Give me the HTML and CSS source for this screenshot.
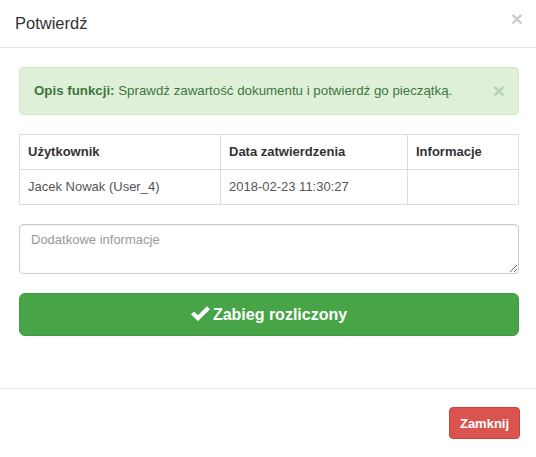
FILE: index.html
```html
<!DOCTYPE html>
<html lang="pl">
<head>
    <meta charset="UTF-8">
    <meta name="viewport" content="width=device-width, initial-scale=1.0">
    <title>Potwierdź</title>
    <link rel="stylesheet" href="styles.css">
</head>
<body>
    <div class="modal">
        <div class="modal-header">
            <h4 class="modal-title">Potwierdź</h4>
            <button type="button" class="close">&times;</button>
        </div>
        <div class="modal-body">
            <div class="alert">
                <span><b>Opis funkcji:</b> Sprawdź zawartość dokumentu i potwierdź go pieczątką.</span>
                <button type="button" class="close alert-close">&times;</button>
            </div>
            <table class="info-table">
                <colgroup>
                    <col class="col-user">
                    <col class="col-date">
                    <col>
                </colgroup>
                <thead>
                    <tr>
                        <th>Użytkownik</th>
                        <th>Data zatwierdzenia</th>
                        <th>Informacje</th>
                    </tr>
                </thead>
                <tbody>
                    <tr>
                        <td>Jacek Nowak (User_4)</td>
                        <td>2018-02-23 11:30:27</td>
                        <td></td>
                    </tr>
                </tbody>
            </table>
            <textarea class="notes" placeholder="Dodatkowe informacje"></textarea>
            <button type="button" class="btn-confirm">
                <svg class="check" width="19" height="15" viewBox="0 0 19 15">
                    <polygon points="0,8.5 3,5.5 7,9.3 16,0.3 19,3.3 7,15" fill="#fff"/>
                </svg>
                Zabieg rozliczony
            </button>
        </div>
        <div class="modal-footer">
            <button type="button" class="btn-close">Zamknij</button>
        </div>
    </div>
</body>
</html>
```

FILE: styles.css
```css
* {
    margin: 0;
    padding: 0;
    box-sizing: border-box;
}

body {
    font-family: "Liberation Sans", Arial, sans-serif;
    font-size: 13px;
    line-height: 18px;
    color: #333;
    background: #fff;
}

.modal {
    width: 536px;
    background: #fff;
}

.modal-header {
    display: flex;
    justify-content: space-between;
    align-items: flex-start;
    padding: 12px 13px 12px 15px;
    border-bottom: 1px solid #e5e5e5;
}

.modal-title {
    font-size: 16.5px;
    font-weight: normal;
    line-height: 23px;
    color: #333;
}

.close {
    border: 0;
    background: none;
    font-family: "Liberation Sans", Arial, sans-serif;
    font-size: 21px;
    font-weight: bold;
    line-height: 1;
    color: #000;
    opacity: .2;
    margin-top: -4px;
}

.modal-body {
    display: flex;
    flex-direction: column;
    padding: 19px 17px 52px 19px;
}

.alert {
    display: flex;
    justify-content: space-between;
    align-items: center;
    height: 48px;
    padding: 0 13px 0 14px;
    margin-bottom: 19px;
    background: #dff0d8;
    border: 1px solid #d6e9c6;
    border-radius: 4px;
    color: #3c763d;
    font-size: 13.3px;
}

.alert-close {
    margin-top: -2px;
    color: #3c763d;
    opacity: .25;
}

.info-table {
    width: 500px;
    border-collapse: collapse;
    table-layout: fixed;
    margin-bottom: 19px;
}

.col-user {
    width: 201px;
}

.col-date {
    width: 187px;
}

.info-table th,
.info-table td {
    border: 1px solid #ddd;
    padding: 8px 8px;
    height: 35px;
    text-align: left;
    vertical-align: middle;
}

.info-table th {
    font-weight: bold;
    color: #333;
}

.info-table td {
    color: #555;
}

.notes {
    display: block;
    width: 500px;
    height: 50px;
    padding: 6px 11px;
    margin-bottom: 19px;
    border: 1px solid #ccc;
    border-radius: 4px;
    font-family: "Liberation Sans", Arial, sans-serif;
    font-size: 13px;
    line-height: 18px;
    color: #555;
    box-shadow: inset 0 1px 1px rgba(0, 0, 0, .075);
}

.notes::placeholder {
    color: #999;
}

.btn-confirm {
    display: flex;
    justify-content: center;
    align-items: center;
    gap: 3px;
    width: 500px;
    height: 43px;
    border: 1px solid #409a40;
    border-radius: 6px;
    background: #47a447;
    color: #fff;
    font-family: "Liberation Sans", Arial, sans-serif;
    font-size: 16px;
    font-weight: bold;
}

.check {
    margin-top: -2px;
}

.modal-footer {
    display: flex;
    justify-content: flex-end;
    padding: 18px 16px 19px;
    border-top: 1px solid #e5e5e5;
}

.btn-close {
    height: 32px;
    width: 71px;
    border: 1px solid #d43f3a;
    border-radius: 4px;
    background: #d9534f;
    color: #fff;
    font-family: "Liberation Sans", Arial, sans-serif;
    font-size: 13px;
    font-weight: bold;
}
```
